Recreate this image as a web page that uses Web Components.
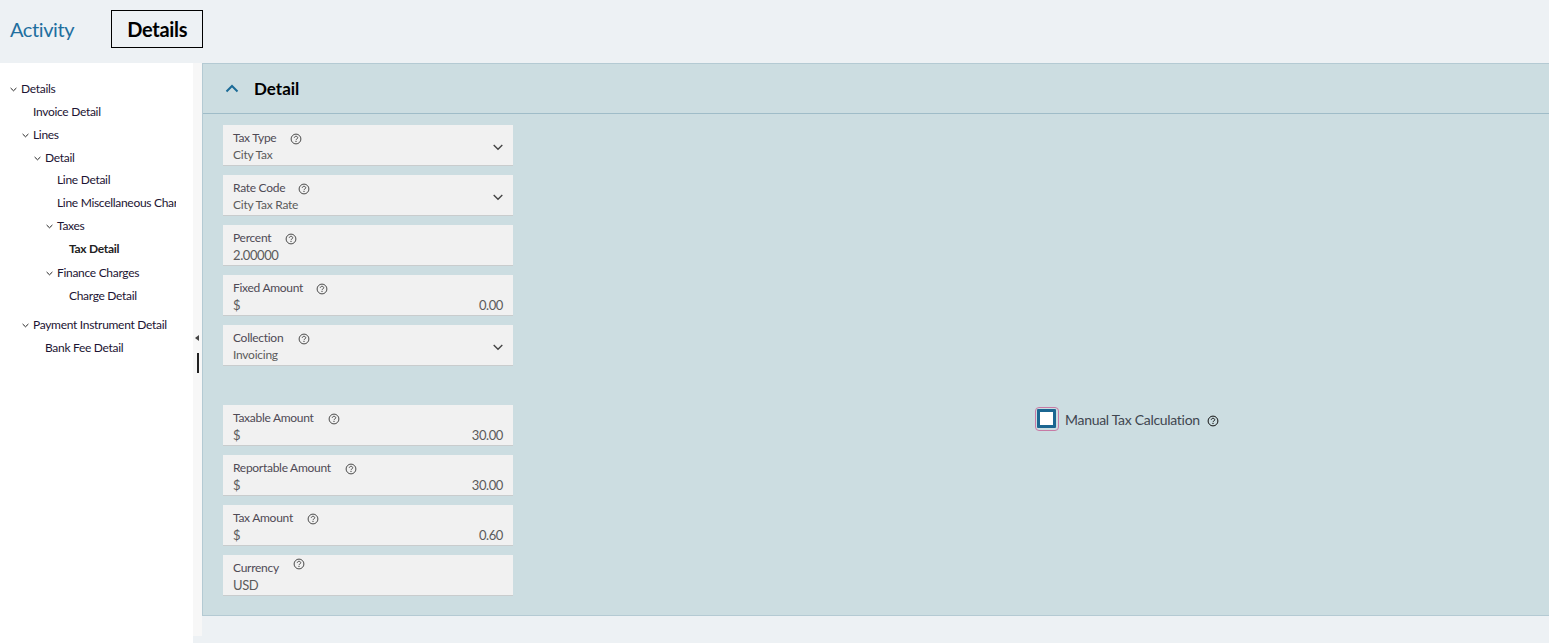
<!DOCTYPE html>
<html lang="en">
<head>
<meta charset="utf-8">
<title>Tax Detail</title>
<style>
  html, body { margin: 0; height: 643px; overflow: hidden; }
  body {
    background: #edf1f4;
    font-family: "Lato", "Noto Sans", sans-serif;
    color: #000;
  }
  .page { display: grid; grid-template-rows: 63px 1fr; height: 643px; }
  .body { display: grid; grid-template-columns: 202px 1fr; align-items: start; }
</style>
</head>
<body>
<div class="page">
  <page-tabs></page-tabs>
  <div class="body">
    <nav-tree>
      <tree-item level="0" open>Details</tree-item>
      <tree-item level="1">Invoice Detail</tree-item>
      <tree-item level="1" open>Lines</tree-item>
      <tree-item level="2" open tight>Detail</tree-item>
      <tree-item level="3">Line Detail</tree-item>
      <tree-item level="3">Line Miscellaneous Charges</tree-item>
      <tree-item level="3" open>Taxes</tree-item>
      <tree-item level="4" current loose>Tax Detail</tree-item>
      <tree-item level="3" open>Finance Charges</tree-item>
      <tree-item level="4" gap>Charge Detail</tree-item>
      <tree-item level="1" open>Payment Instrument Detail</tree-item>
      <tree-item level="2">Bank Fee Detail</tree-item>
    </nav-tree>
    <detail-panel heading="Detail">
      <form-field label="Tax Type" value="City Tax" select help="67"></form-field>
      <form-field label="Rate Code" value="City Tax Rate" select help="75"></form-field>
      <form-field label="Percent" value="2.00000" help="62" big></form-field>
      <form-field label="Fixed Amount" currency value="0.00" help="93"></form-field>
      <form-field label="Collection" value="Invoicing" select help="75"></form-field>
      <form-field slot="second" label="Taxable Amount" currency value="30.00" help="105"></form-field>
      <form-field slot="second" label="Reportable Amount" currency value="30.00" help="122"></form-field>
      <form-field slot="second" label="Tax Amount" currency value="0.60" help="84"></form-field>
      <form-field slot="second" label="Currency" value="USD" help="70" raised big></form-field>
      <check-field slot="aside" label="Manual Tax Calculation"></check-field>
    </detail-panel>
  </div>
</div>

<script>
const html = String.raw;

const helpIcon = html`<svg viewBox="0 0 12 12" width="12" height="12" fill="none" stroke="currentColor" aria-hidden="true">
  <circle cx="6" cy="6" r="4.9" stroke-width="1"/>
  <path d="M4.3 4.8C4.4 3.8 5.1 3.3 6 3.3c1 0 1.7.6 1.7 1.4 0 .7-.4 1-1 1.4-.5.3-.7.6-.7 1.1" stroke-width="1"/>
  <path d="M6 8v1" stroke-width="1.1"/>
</svg>`;

class PageTabs extends HTMLElement {
  constructor() {
    super();
    this.attachShadow({ mode: "open" }).innerHTML = html`
      <style>
        :host { display: flex; align-items: flex-start; gap: 37px; padding: 10px 0 0 10px; box-sizing: border-box; height: 63px; }
        .link { font-size: 20px; line-height: 38px; color: #1f6f9f; letter-spacing: -.4px; }
        .active {
          box-sizing: border-box; width: 92px; height: 38px; border: 1px solid #000;
          font-size: 20px; font-weight: 700; line-height: 36px; text-align: center; letter-spacing: -.3px;
        }
      </style>
      <span class="link">Activity</span>
      <span class="active">Details</span>`;
  }
}

class NavTree extends HTMLElement {
  constructor() {
    super();
    this.attachShadow({ mode: "open" }).innerHTML = html`
      <style>
        :host { display: grid; grid-template-columns: 193px 9px; align-items: start; height: 580px; }
        .list { background: #fff; height: 580px; box-sizing: border-box; padding: 15px 17px 0 0; overflow: hidden; }
        .grip { position: relative; height: 573px; background: #f7f7f7; }
        .arrow { position: absolute; left: 2px; top: 272px; width: 0; height: 0; border: 3px solid transparent; border-left-width: 0; border-right: 4px solid #444; }
        .bar { position: absolute; left: 4px; top: 290px; width: 2px; height: 20px; background: #222; }
      </style>
      <div class="list"><slot></slot></div>
      <div class="grip"><span class="arrow"></span><span class="bar"></span></div>`;
  }
}

class TreeItem extends HTMLElement {
  constructor() {
    super();
    const level = Number(this.getAttribute("level"));
    const open = this.hasAttribute("open");
    this.attachShadow({ mode: "open" }).innerHTML = html`
      <style>
        :host { display: block; height: 23px; font-size: 12px; line-height: 22px; letter-spacing: -.3px; color: #1c1433; white-space: nowrap; overflow: hidden; }
        :host([current]) { font-weight: 700; color: #222; }
        :host([tight]) { height: 22px; }
        :host([loose]) { height: 24px; }
        :host([gap]) { height: 29px; }
        .row { display: flex; align-items: center; height: 22px; }
        svg { width: 7px; height: 5px; margin: 0 4px 0 0; flex: none; }
      </style>
      <div class="row" style="padding-left:${level * 12 + (open ? 10 : 21)}px">
        ${open ? html`<svg viewBox="0 0 7 5" fill="none" stroke="#222"><path d="M.6 1l2.9 2.8L6.4 1"/></svg>` : ""}
        <span><slot></slot></span>
      </div>`;
  }
}

class DetailPanel extends HTMLElement {
  constructor() {
    super();
    this.attachShadow({ mode: "open" }).innerHTML = html`
      <style>
        :host { display: block; box-sizing: border-box; height: 553px; background: #ccdde1; border: 1px solid #b4cad3; border-right: 0; }
        header { display: flex; align-items: center; gap: 15px; height: 49px; padding-left: 22px; border-bottom: 1px solid #9fbcc8; }
        h2 { margin: 0; font-size: 17px; font-weight: 700; }
        .body { padding: 11px 0 0 20px; }
        .stack { display: grid; gap: 9px; width: 290px; }
        .lower { display: grid; grid-template-columns: 290px 1fr; margin-top: 39px; }
        .aside { padding: 2px 0 0 522px; }
      </style>
      <header>
        <svg width="14" height="9" viewBox="0 0 14 9" fill="none" stroke="#1b6b97" stroke-width="2"><path d="M1.5 7.5L7 2l5.5 5.5"/></svg>
        <h2>${this.getAttribute("heading")}</h2>
      </header>
      <div class="body">
        <div class="stack"><slot></slot></div>
        <div class="lower">
          <div class="stack"><slot name="second"></slot></div>
          <div class="aside"><slot name="aside"></slot></div>
        </div>
      </div>`;
  }
}

class FormField extends HTMLElement {
  constructor() {
    super();
    const label = this.getAttribute("label");
    const value = this.getAttribute("value");
    const isSelect = this.hasAttribute("select");
    const isCurrency = this.hasAttribute("currency");
    const raised = this.hasAttribute("raised");
    const help = Number(this.getAttribute("help"));
    this.attachShadow({ mode: "open" }).innerHTML = html`
      <style>
        :host { display: block; box-sizing: border-box; height: 41px; background: #f1f1f1; border-bottom: 1px solid #c9cccd; padding: 5px 10px 0; position: relative; color: #5b5b5b; }
        .label { display: flex; align-items: center; height: 16px; font-size: 12px; line-height: 16px; letter-spacing: -.28px; color: #4f4a55; }
        .help { position: absolute; left: ${help}px; top: ${raised ? 3 : 8}px; display: flex; color: #4a4a4a; }
        .value { display: flex; justify-content: space-between; height: 18px; font-size: 12px; line-height: 18px; letter-spacing: -.25px; }
        :host([big]) .value, :host([currency]) .value { font-size: 13px; letter-spacing: -.4px; }
        .chev { position: absolute; right: 10px; top: 19px; }
      </style>
      <div class="label">${label}</div>
      <span class="help">${helpIcon}</span>
      <div class="value">
        ${isCurrency ? html`<span>$</span>` : ""}<span>${value}</span>
      </div>
      ${isSelect ? html`<svg class="chev" width="10" height="7" viewBox="0 0 10 7" fill="none" stroke="#444" stroke-width="1.4"><path d="M.7 1l4.3 4.3L9.3 1"/></svg>` : ""}`;
  }
}

class CheckField extends HTMLElement {
  constructor() {
    super();
    this.attachShadow({ mode: "open" }).innerHTML = html`
      <style>
        :host { display: inline-flex; align-items: center; font-size: 14px; letter-spacing: -.3px; color: #3f4650; }
        .ring { box-sizing: border-box; width: 24px; height: 24px; padding: 1px 2px 2px 1px; border: 1px solid #c77aa5; border-radius: 4px; margin-right: 6px; }
        .box { display: block; box-sizing: border-box; width: 19px; height: 19px; border: 3px solid #1b6691; background: #fff; border-radius: 1px; }
        .help { display: flex; margin: 4px 0 0 7px; color: #111; }
      </style>
      <span class="ring"><span class="box"></span></span>
      <span>${this.getAttribute("label")}</span>
      <span class="help">${helpIcon}</span>`;
  }
}

customElements.define("page-tabs", PageTabs);
customElements.define("nav-tree", NavTree);
customElements.define("tree-item", TreeItem);
customElements.define("detail-panel", DetailPanel);
customElements.define("form-field", FormField);
customElements.define("check-field", CheckField);
</script>
</body>
</html>
